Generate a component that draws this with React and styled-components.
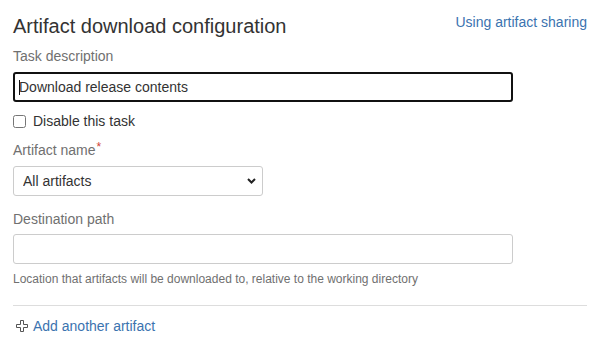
import React from "react";
import styled, { createGlobalStyle } from "styled-components";

const Global = createGlobalStyle`
  html, body { margin: 0; padding: 0; background: #fff; }
  body { font-family: "Liberation Sans", Arial, sans-serif; color: #333; }
  * { box-sizing: border-box; }
`;

const Page = styled.div`
  width: 599px;
  padding: 14px 12px 0 13px;
  display: flex;
  flex-direction: column;
`;

const Header = styled.div`
  display: flex;
  justify-content: space-between;
  align-items: flex-start;
`;

const Title = styled.h2`
  margin: 0;
  font-size: 20px;
  line-height: 24px;
  font-weight: 400;
  color: #333;
`;

const Link = styled.a`
  color: #3b73af;
  text-decoration: none;
  font-size: 14px;
  line-height: ${(p) => p.$lh || 20}px;
  cursor: pointer;
  display: inline-flex;
  align-items: center;
  gap: 5px;
`;

const Field = styled.div`
  display: flex;
  flex-direction: column;
  margin-top: ${(p) => p.$top}px;
`;

const Label = styled.label`
  font-size: 14px;
  line-height: 20px;
  color: #707070;
  margin-bottom: ${(p) => p.$gap ?? 5}px;
`;

const Required = styled.span`
  color: #d04437;
  position: relative;
  top: -4px;
  font-size: 12px;
  margin-left: 1px;
`;

const InputWrap = styled.div`
  position: relative;
  width: 500px;
`;

const TextInput = styled.input`
  width: 500px;
  height: 30px;
  font-family: inherit;
  font-size: 14px;
  color: #333;
  border-radius: 3px;
  border: ${(p) => (p.$focused ? "2px solid #111" : "1px solid #ccc")};
  padding: 0 ${(p) => (p.$focused ? 4 : 5)}px;
  outline: none;
  background: #fff;
`;

const Caret = styled.span`
  position: absolute;
  left: 6px;
  top: 8px;
  width: 1px;
  height: 15px;
  background: #111;
`;

const CheckRow = styled.label`
  display: flex;
  align-items: center;
  gap: 7px;
  margin-top: 9px;
  font-size: 14px;
  line-height: 20px;
  color: #333;
`;

const Checkbox = styled.input`
  margin: 0;
  width: 13px;
  height: 13px;
`;

const SelectWrap = styled.div`
  position: relative;
  width: 250px;
`;

const Select = styled.select`
  appearance: none;
  -webkit-appearance: none;
  width: 250px;
  height: 30px;
  border: 1px solid #ccc;
  border-radius: 3px;
  background: #fff;
  font-family: inherit;
  font-size: 14px;
  color: #333;
  padding: 0 24px 0 9px;
  outline: none;
`;

const Chevron = styled.svg`
  position: absolute;
  right: 7px;
  top: 12px;
  pointer-events: none;
`;

const Help = styled.div`
  font-size: 12px;
  line-height: 16px;
  color: #707070;
  margin-top: 7px;
`;

const Rule = styled.hr`
  border: 0;
  border-top: 1px solid #ddd;
  margin: 18px 0 10px 0;
  width: 574px;
`;

const PlusSvg = styled.svg`
  margin-left: 3px;
  flex: none;
`;

const PlusIcon = () => (
  <PlusSvg width="12" height="12" viewBox="0 0 12 12">
    <path
      d="M4.5 0.5h3v4h4v3h-4v4h-3v-4h-4v-3h4z"
      fill="#fff"
      stroke="#555"
      strokeWidth="1"
    />
  </PlusSvg>
);

export default function App() {
  return (
    <>
      <Global />
      <Page>
        <Header>
          <Title>Artifact download configuration</Title>
          <Link $lh={16}>Using artifact sharing</Link>
        </Header>

        <Field $top={8}>
          <Label $gap={6}>Task description</Label>
          <InputWrap>
            <TextInput $focused defaultValue="Download release contents" />
            <Caret />
          </InputWrap>
        </Field>

        <CheckRow>
          <Checkbox type="checkbox" />
          Disable this task
        </CheckRow>

        <Field $top={9}>
          <Label>
            Artifact name<Required>*</Required>
          </Label>
          <SelectWrap>
            <Select defaultValue="all">
              <option value="all">All artifacts</option>
            </Select>
            <Chevron width="9" height="6" viewBox="0 0 9 6">
              <path d="M1 1l3.5 3.5L8 1" fill="none" stroke="#222" strokeWidth="2" />
            </Chevron>
          </SelectWrap>
        </Field>

        <Field $top={13}>
          <Label>Destination path</Label>
          <TextInput />
          <Help>Location that artifacts will be downloaded to, relative to the working directory</Help>
        </Field>

        <Rule />

        <div>
          <Link>
            <PlusIcon />
            Add another artifact
          </Link>
        </div>
      </Page>
    </>
  );
}
